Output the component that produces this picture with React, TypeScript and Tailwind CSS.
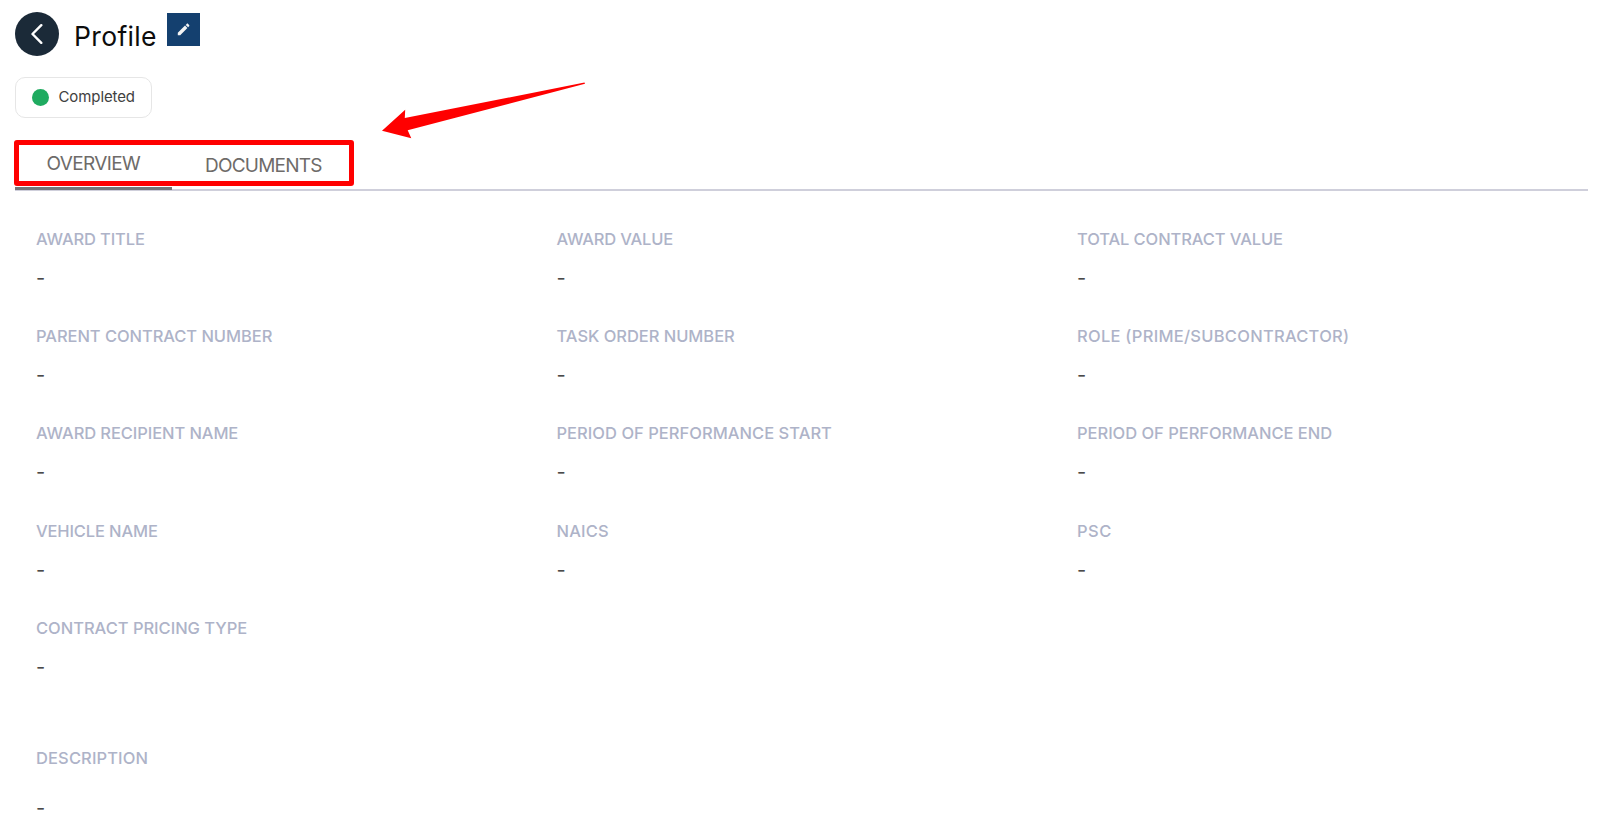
type Field = { label: string; tracking: string };

const fields: Field[] = [
  { label: "AWARD TITLE", tracking: "tracking-[-0.14px]" },
  { label: "AWARD VALUE", tracking: "tracking-[-0.2px]" },
  { label: "TOTAL CONTRACT VALUE", tracking: "tracking-[-0.1px]" },
  { label: "PARENT CONTRACT NUMBER", tracking: "tracking-[-0.06px]" },
  { label: "TASK ORDER NUMBER", tracking: "tracking-[-0.04px]" },
  { label: "ROLE (PRIME/SUBCONTRACTOR)", tracking: "tracking-[0.27px]" },
  { label: "AWARD RECIPIENT NAME", tracking: "tracking-[-0.09px]" },
  { label: "PERIOD OF PERFORMANCE START", tracking: "tracking-[0.03px]" },
  { label: "PERIOD OF PERFORMANCE END", tracking: "tracking-[-0.03px]" },
  { label: "VEHICLE NAME", tracking: "tracking-[-0.14px]" },
  { label: "NAICS", tracking: "tracking-[0.2px]" },
  { label: "PSC", tracking: "tracking-[0.5px]" },
  { label: "CONTRACT PRICING TYPE", tracking: "tracking-[-0.02px]" },
];

function FieldLabel({ label, tracking }: Field) {
  return (
    <dt className={`text-[16.5px] leading-6 font-medium whitespace-nowrap text-[#aeb3c8] ${tracking}`}>
      {label}
    </dt>
  );
}

export default function App() {
  return (
    <main className="relative h-[829px] overflow-hidden bg-white pl-[15px] pr-3 pt-3 font-['Inter',sans-serif]">
      <header className="flex h-[44px] items-start">
        <button
          aria-label="Back"
          className="flex size-[44px] shrink-0 items-center justify-center rounded-full bg-[#1b2a38]"
        >
          <svg width="12" height="20" viewBox="0 0 12 20" fill="none" stroke="#fff" strokeWidth="2.4" strokeLinecap="round" strokeLinejoin="round">
            <path d="M10.3 1.2 1.5 10l8.8 8.8" />
          </svg>
        </button>
        <h1 className="ml-[15px] mt-[8px] w-[93px] text-[26.5px] tracking-[0.35px] leading-8 text-[#0c0c0c]">Profile</h1>
        <button aria-label="Edit" className="mt-[1px] flex size-[33px] items-center justify-center bg-[#14406f]">
          <svg width="13" height="13" viewBox="0 0 13 13" fill="#f4f4f4">
            <path d="M.8 9.8 8 2.6l2.4 2.4-7.2 7.2H.8zM8.7 1.9l1-1c.4-.4 1-.4 1.4 0l1 1c.4.4.4 1 0 1.4l-1 1z" />
          </svg>
        </button>
      </header>

      <div className="mt-[21px] flex h-[41px] w-[137px] items-center rounded-[10px] border-[1.5px] border-[#e6e6e6] pl-4">
        <span className="size-[17px] rounded-full bg-[#1fab60]" />
        <span className="-mt-[2px] ml-[9.5px] text-[15px] tracking-[-0.1px] leading-5 text-[#414141]">Completed</span>
      </div>

      <nav className="mt-[22px] flex h-[51px] border-b-2 border-[#cfcfdb] text-[19px] leading-6 text-[#6e6b69]">
        <button className="-mb-[2px] flex h-[50px] w-[157px] items-start border-b-[3px] border-[#757578] pl-[31.5px] pt-[12px] tracking-[-0.65px]">
          OVERVIEW
        </button>
        <button className="flex items-start pl-[33px] pt-[13.5px] tracking-[-0.78px]">DOCUMENTS</button>
      </nav>

      <dl className="mt-[36px] grid grid-cols-[520.5px_520.5px_1fr] auto-rows-[97.2px] pl-[21px]">
        {fields.map((f) => (
          <div key={f.label}>
            <FieldLabel {...f} />
            <dd className="mt-[15px] text-[20px] leading-6 text-[#4a4a4a]">-</dd>
          </div>
        ))}
      </dl>

      <dl className="mt-[33px] pl-[21px]">
        <FieldLabel label="DESCRIPTION" tracking="tracking-[0.12px]" />
        <dd className="mt-[26px] text-[20px] leading-6 text-[#4a4a4a]">-</dd>
      </dl>

      <div className="absolute left-[14px] top-[140px] h-[46px] w-[340px] rounded-[3px] border-[5px] border-[#ff0000]" />
      <svg className="absolute left-[370px] top-[70px]" width="230" height="80" viewBox="0 0 230 80" fill="#ff0000">
        <path d="M12 60.8 35.2 39.7 34.8 48 214.5 12.6 215 13.7 37.7 60.3 41.3 68.3Z" />
      </svg>
    </main>
  );
}
